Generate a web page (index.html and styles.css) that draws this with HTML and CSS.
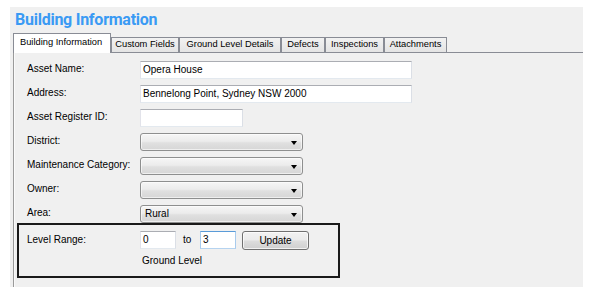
FILE: index.html
```html
<!DOCTYPE html>
<html>
<head>
<meta charset="utf-8">
<link rel="stylesheet" href="styles.css">
</head>
<body>
<div class="window">
  <h1 class="title">Building Information</h1>
  <div class="tabs">
    <div class="tab active t1">Building Information</div>
    <div class="tab t2">Custom Fields</div>
    <div class="tab t3">Ground Level Details</div>
    <div class="tab t4">Defects</div>
    <div class="tab t5">Inspections</div>
    <div class="tab t6">Attachments</div>
  </div>
  <div class="page">
    <div class="form">
      <span class="lbl">Asset Name:</span>
      <div class="text w-long">Opera House</div>
      <span class="lbl">Address:</span>
      <div class="text w-long">Bennelong Point, Sydney NSW 2000</div>
      <span class="lbl">Asset Register ID:</span>
      <div class="text w-mid"></div>
      <span class="lbl">District:</span>
      <div class="select"><span class="val"></span><span class="arrow"></span></div>
      <span class="lbl">Maintenance Category:</span>
      <div class="select"><span class="val"></span><span class="arrow"></span></div>
      <span class="lbl">Owner:</span>
      <div class="select"><span class="val"></span><span class="arrow"></span></div>
      <span class="lbl">Area:</span>
      <div class="select"><span class="val">Rural</span><span class="arrow"></span></div>
    </div>
    <div class="box">
      <div class="range">
        <span class="lbl range-lbl">Level Range:</span>
        <div class="text w-short">0</div>
        <span class="to">to</span>
        <div class="text w-short focus">3</div>
        <button class="btn">Update</button>
      </div>
      <div class="note">Ground Level</div>
    </div>
  </div>
</div>
</body>
</html>
```

FILE: styles.css
```css
* { box-sizing: border-box; }

body {
  margin: 0;
  background: #ffffff;
  font-family: "Liberation Sans", Arial, sans-serif;
  font-size: 10px;
  color: #000;
}

.window {
  margin: 7px 0 0 10px;
  width: 573px;
  height: 280px;
  background: #f0f0f0;
  overflow: hidden;
}

.title {
  margin: 0 0 4px 0;
  padding: 3px 0 0 5px;
  font-family: Roboto, "Liberation Sans", sans-serif;
  font-weight: 700;
  font-size: 16px;
  line-height: 19px;
  letter-spacing: -0.25px;
  color: #3a9af4;
}

.tabs {
  display: flex;
  align-items: flex-end;
  height: 20px;
  margin-left: 3px;
  border-bottom: 1px solid #898c95;
}

.tab {
  height: 15px;
  border: 1px solid #898c95;
  border-bottom: none;
  background: linear-gradient(#f2f2f2, #e4e4e4);
  font-size: 9.3px;
  line-height: 13px;
  text-align: center;
  white-space: nowrap;
}

.tab.active {
  height: 20px;
  margin-bottom: -1px;
  background: #ffffff;
  position: relative;
  z-index: 1;
  line-height: 17px;
  text-align: left;
  padding-left: 6px;
}

.t1 { width: 98px; }
.t2 { width: 68px; }
.t3 { width: 102px; }
.t4 { width: 44px; }
.t5 { width: 59px; }
.t6 { width: 63px; }

.page {
  margin-left: 3px;
  height: 234px;
  border-left: 1px solid #9a9a9a;
  box-shadow: inset 1px 0 #fafafa;
  padding: 8px 0 0 13px;
}

.form {
  display: grid;
  grid-template-columns: 113px auto;
  grid-auto-rows: 18px;
  row-gap: 6px;
  align-items: center;
  justify-items: start;
}

.lbl {
  line-height: 12px;
  margin-top: -2px;
}

.text {
  height: 18px;
  border: 1px solid;
  border-color: #abadb3 #dbdfe6 #e3e9ef #e2e3ea;
  background: #ffffff;
  padding: 0 2px;
  line-height: 16px;
  white-space: nowrap;
}

.w-long { width: 272px; }
.w-mid { width: 103px; }
.w-short { width: 36px; }

.text.focus {
  border-color: #5a9bd8 #a8cbed #b5d3f0 #a8cbed;
}

.select {
  width: 163px;
  height: 18px;
  border: 1px solid #8e8f8f;
  border-radius: 3px;
  background: linear-gradient(#f6f6f6, #ececec 45%, #e0e0e0 55%, #d6d6d6);
  box-shadow: inset 0 0 0 1px rgba(255,255,255,0.6);
  padding: 0 5px 0 4px;
  display: flex;
  align-items: center;
  justify-content: space-between;
  line-height: 16px;
}

.arrow {
  width: 0;
  height: 0;
  border-left: 3.5px solid transparent;
  border-right: 3.5px solid transparent;
  border-top: 4px solid #000;
  margin-top: 2px;
}

.box {
  margin: 0 0 0 -10px;
  width: 323px;
  height: 55px;
  border: 2px solid #1a1a1a;
  padding: 6px 0 0 8px;
}

.range {
  display: flex;
  align-items: flex-start;
  height: 19px;
}

.range-lbl {
  width: 113px;
  margin-top: 3px;
}

.to {
  margin: 3px 0 0 7px;
  line-height: 12px;
  width: 17px;
}

.btn {
  margin-left: 6px;
  width: 67px;
  height: 19px;
  border: 1px solid #707070;
  border-radius: 3px;
  background: linear-gradient(#f2f2f2, #ebebeb 48%, #dddddd 52%, #cfcfcf);
  box-shadow: inset 0 0 0 1px rgba(255,255,255,0.7);
  font-family: "Liberation Sans", Arial, sans-serif;
  font-size: 10px;
  color: #000;
  padding: 0;
  line-height: 16px;
}

.note {
  margin: 5px 0 0 113px;
  padding-left: 2px;
  line-height: 12px;
}
```
